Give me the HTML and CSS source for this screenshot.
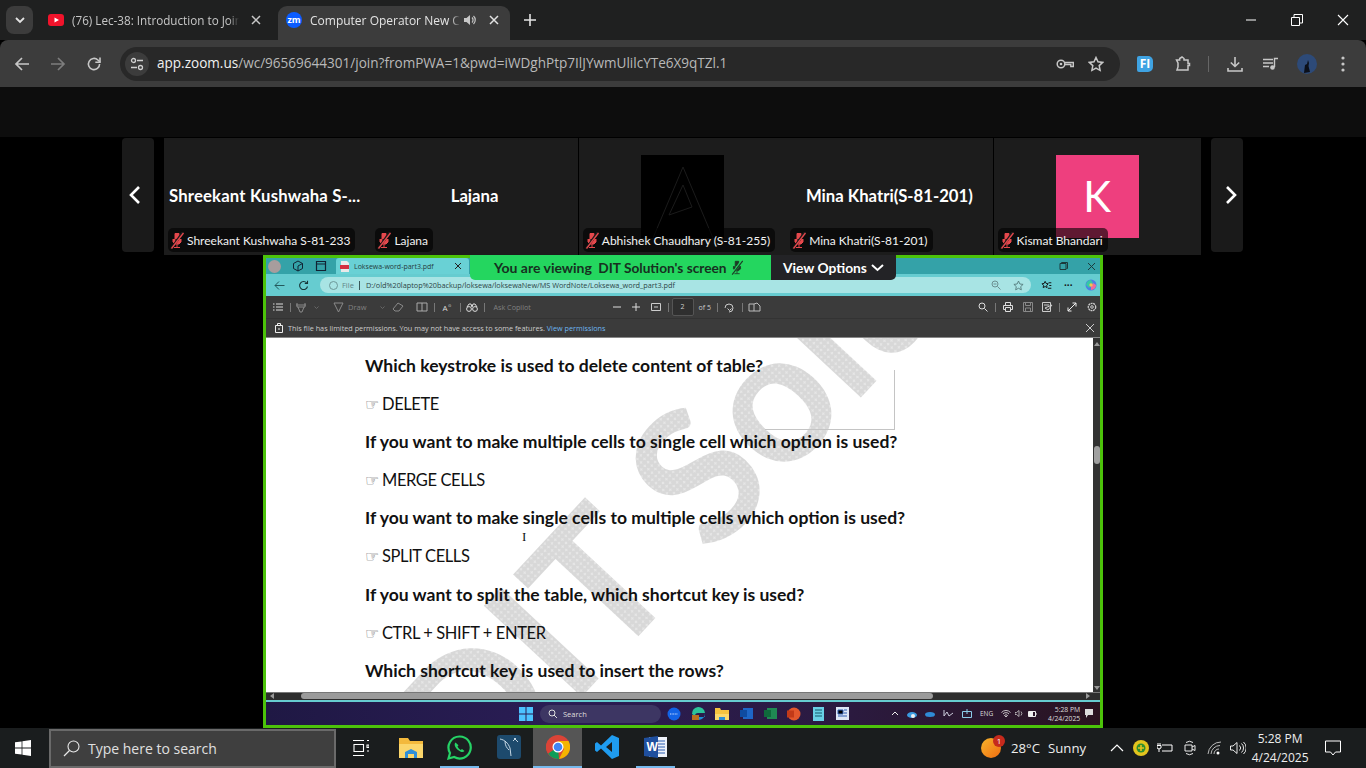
FILE: index.html
```html
<!DOCTYPE html>
<html lang="en">
<head>
    <meta charset="UTF-8">
    <title>Computer Operator New Class</title>
    <link rel="stylesheet" href="styles.css">
</head>
<body>
    <!-- Browser tabs -->
    <div class="tabstrip">
        <div class="tab-search"><svg width="12" height="12" viewBox="0 0 12 12"><path d="M2 4l4 4 4-4" fill="none" stroke="#e3e3e3" stroke-width="1.8"/></svg></div>
        <div class="tab tab-one">
            <svg width="16" height="12" viewBox="0 0 16 12"><rect width="16" height="12" rx="3" fill="#f1132b"/><path d="M6.5 3.4v5.2L11 6z" fill="#fff"/></svg>
            <span class="tab-title">(76) Lec-38: Introduction to Join</span>
            <svg class="tab-x" width="10" height="10" viewBox="0 0 10 10"><path d="M1 1l8 8M9 1L1 9" stroke="#c7c7c7" stroke-width="1.5"/></svg>
        </div>
        <div class="tab tab-active">
            <span class="zm-icon">zm</span>
            <span class="tab-title">Computer Operator New Cl</span>
            <svg class="tab-sound" width="14" height="14" viewBox="0 0 14 14"><path d="M1 5v4h2.500L7 12V2L3.500 5z" fill="#c7c7c7"/><path d="M9 4.500a3.500 3.500 0 010 5M10.500 3a5.500 5.500 0 010 8" fill="none" stroke="#c7c7c7" stroke-width="1.200"/></svg>
            <svg class="tab-x" width="10" height="10" viewBox="0 0 10 10"><path d="M1 1l8 8M9 1L1 9" stroke="#e3e3e3" stroke-width="1.5"/></svg>
        </div>
        <svg class="tab-new" width="12" height="12" viewBox="0 0 12 12"><path d="M6 0v12M0 6h12" stroke="#e3e3e3" stroke-width="1.6"/></svg>
        <div class="win-controls">
            <svg width="12" height="12" viewBox="0 0 12 12"><path d="M1 6h10" stroke="#fff"/></svg>
            <svg width="12" height="12" viewBox="0 0 12 12"><path d="M.5 3.500h8v8h-8zM3 3.500V.5h8.500V9H8.500" fill="none" stroke="#fff"/></svg>
            <svg width="12" height="12" viewBox="0 0 12 12"><path d="M1 1l10 10M11 1L1 11" stroke="#fff" stroke-width="1.100"/></svg>
        </div>
    </div>

    <!-- Browser toolbar -->
    <div class="toolbar">
        <svg class="nav" width="16" height="16" viewBox="0 0 16 16"><path d="M15 8H2M8 2L2 8l6 6" fill="none" stroke="#c7c7c7" stroke-width="1.700"/></svg>
        <svg class="nav" width="16" height="16" viewBox="0 0 16 16"><path d="M1 8h13M8 2l6 6-6 6" fill="none" stroke="#7d7d7d" stroke-width="1.700"/></svg>
        <svg class="nav" width="16" height="16" viewBox="0 0 16 16"><path d="M13.600 8A5.600 5.600 0 1 1 11.900 4L14 6" fill="none" stroke="#c7c7c7" stroke-width="1.600"/><path d="M14 1.500v4.700H9.300" fill="none" stroke="#c7c7c7" stroke-width="1.600"/></svg>
        <div class="omnibox">
            <span class="site-icon"><svg width="14" height="14" viewBox="0 0 14 14"><circle cx="3.500" cy="3.500" r="2" fill="none" stroke="#d0d0d0" stroke-width="1.300"/><path d="M7 3.500h6M1 10.500h6" stroke="#d0d0d0" stroke-width="1.300"/><circle cx="10.500" cy="10.500" r="2" fill="none" stroke="#d0d0d0" stroke-width="1.300"/></svg></span>
            <span class="url"><b>app.zoom.us</b>/wc/96569644301/join?fromPWA=1&amp;pwd=iWDghPtp7IlJYwmUlilcYTe6X9qTZl.1</span>
            <svg class="key" width="18" height="12" viewBox="0 0 18 12"><circle cx="5" cy="6" r="3.800" fill="none" stroke="#c7c7c7" stroke-width="1.500"/><circle cx="5" cy="6" r="1.300" fill="#c7c7c7"/><path d="M9 4.500h8.300v4h-2.500V6.500H9" fill="none" stroke="#c7c7c7" stroke-width="1.400"/></svg>
            <svg class="star" width="16" height="16" viewBox="0 0 16 16"><path d="M8 1.500l2 4.300 4.700.6-3.500 3.200.9 4.700L8 12l-4.100 2.300.9-4.700L1.300 6.400 6 5.800z" fill="none" stroke="#c7c7c7" stroke-width="1.500"/></svg>
        </div>
        <span class="ext-fi">FI</span>
        <svg class="ext-puzzle" width="16" height="16" viewBox="0 0 16 16"><path d="M1.500 4h3.200V2.500L7 1l2 1.500V4h4v3.500h1.500v2H13V14H2l1-3V7z" fill="none" stroke="#c7c7c7" stroke-width="1.500"/></svg>
        <span class="tool-sep"></span>
        <svg class="tool-dl" width="16" height="16" viewBox="0 0 16 16"><path d="M8 1v9M3.800 6.500L8 10.500l4.200-4M1 12v3h14v-3" fill="none" stroke="#c7c7c7" stroke-width="1.600"/></svg>
        <svg class="tool-media" width="16" height="14" viewBox="0 0 16 14"><path d="M0 2.500h10M0 6h10M0 9.500h6M11.500 10V1.500H15" fill="none" stroke="#c7c7c7" stroke-width="1.400"/><circle cx="9.500" cy="10.500" r="2.300" fill="#c7c7c7"/></svg>
        <span class="tool-avatar"><svg width="20" height="20" viewBox="0 0 20 20"><circle cx="10" cy="10" r="10" fill="#2d4a78"/><path d="M7 19l1-8 2-1 1-4 1 3-.5 3 1.500 6z" fill="#0b0f18"/></svg></span>
        <svg class="tool-dots" width="4" height="16" viewBox="0 0 4 16"><circle cx="2" cy="2" r="1.600" fill="#c7c7c7"/><circle cx="2" cy="8" r="1.600" fill="#c7c7c7"/><circle cx="2" cy="14" r="1.600" fill="#c7c7c7"/></svg>
    </div>

    <div class="top-gap"></div>

    <!-- Participant strip -->
    <div class="strip">
        <div class="strip-arrow"><svg class="chev-prev" width="12" height="18" viewBox="0 0 12 18"><path d="M10 1L2 9l8 8" fill="none" stroke="#fff" stroke-width="2.600"/></svg></div>
        <div class="tiles">
            <div class="tile">
                <span class="tile-name tile-name-long">Shreekant Kushwaha S-...</span>
                <span class="tile-label"><svg class="mic" width="14" height="17" viewBox="0 0 14 17"><use href="#mic-off"/></svg>Shreekant Kushwaha S-81-233</span>
            </div>
            <div class="tile tile-end">
                <span class="tile-name">Lajana</span>
                <span class="tile-label"><svg class="mic" width="14" height="17" viewBox="0 0 14 17"><use href="#mic-off"/></svg>Lajana</span>
            </div>
            <div class="tile">
                <span class="tile-avatar avatar-black"><svg width="83" height="83" viewBox="0 0 83 83"><path d="M12 83L42 12l30 71M28 60l14-30 9 22z" fill="none" stroke="#1b1b1b" stroke-width="1"/></svg></span>
                <span class="tile-label"><svg class="mic" width="14" height="17" viewBox="0 0 14 17"><use href="#mic-off"/></svg>Abhishek Chaudhary (S-81-255)</span>
            </div>
            <div class="tile tile-end">
                <span class="tile-name">Mina Khatri(S-81-201)</span>
                <span class="tile-label"><svg class="mic" width="14" height="17" viewBox="0 0 14 17"><use href="#mic-off"/></svg>Mina Khatri(S-81-201)</span>
            </div>
            <div class="tile">
                <span class="tile-avatar avatar-pink">K</span>
                <span class="tile-label"><svg class="mic" width="14" height="17" viewBox="0 0 14 17"><use href="#mic-off"/></svg>Kismat Bhandari</span>
            </div>
        </div>
        <div class="strip-arrow strip-next"><svg class="chev-next" width="12" height="18" viewBox="0 0 12 18"><path d="M2 1l8 8-8 8" fill="none" stroke="#fff" stroke-width="2.600"/></svg></div>
    </div>

    <!-- Shared screen -->
    <div class="share-area">
        <div class="share-frame">
            <div class="edge-title">
                <span class="edge-avatar"></span>
                <svg class="edge-ic" width="12" height="12" viewBox="0 0 12 12"><path d="M6 1l4.500 2.500v5L6 11 1.500 8.500v-5zM6 6v5M6 6l4.500-2.500" fill="none" stroke="#123" stroke-width="1"/></svg>
                <svg class="edge-ic" width="12" height="12" viewBox="0 0 12 12"><path d="M1.500 1.500h9v9h-9zM1.500 4h9" fill="none" stroke="#123" stroke-width="1.200"/></svg>
                <div class="edge-tab">
                    <svg width="10" height="11" viewBox="0 0 10 11"><path d="M1 0h6l2 2v9H1z" fill="#e9e9e9"/><rect y="4" width="9" height="4" fill="#d32f3f"/></svg>
                    <span class="edge-tab-title">Loksewa-word-part3.pdf</span>
                    <svg class="edge-tab-x" width="8" height="8" viewBox="0 0 8 8"><path d="M1 1l6 6M7 1L1 7" stroke="#222" stroke-width="1"/></svg>
                </div>
                <div class="edge-controls">
                    <svg width="9" height="9" viewBox="0 0 9 9"><path d="M1 1.500h6v6H1zM2.500 1.500V.5h6v6h-1" fill="none" stroke="#1c3a3c"/></svg>
                    <svg width="9" height="9" viewBox="0 0 9 9"><path d="M1 1l7 7M8 1L1 8" stroke="#1c3a3c"/></svg>
                </div>
            </div>
            <div class="edge-addr">
                <svg width="11" height="11" viewBox="0 0 11 11"><path d="M10.500 5.500H1M5 1.500l-4 4 4 4" fill="none" stroke="#23595c" stroke-width="1"/></svg>
                <svg class="edge-reload" width="11" height="11" viewBox="0 0 11 11"><path d="M9.500 6.500a4 4 0 11-.8-3.500M9.500 .8v2.700H6.800" fill="none" stroke="#173436" stroke-width="1.100"/></svg>
                <div class="edge-pill">
                    <span class="edge-info"></span>
                    <span class="edge-file">File</span>
                    <span class="edge-bar"></span>
                    <span class="edge-url">D:/old%20laptop%20backup/loksewa/loksewaNew/MS WordNote/Loksewa_word_part3.pdf</span>
                    <svg class="edge-zoom" width="10" height="10" viewBox="0 0 10 10"><circle cx="4" cy="4" r="3" fill="none" stroke="#6a8f90"/><path d="M6.500 6.500l3 3M2.500 4h3" stroke="#6a8f90"/></svg>
                    <svg class="edge-star" width="11" height="11" viewBox="0 0 16 16"><path d="M8 1.500l2 4.300 4.700.6-3.500 3.200.9 4.700L8 12l-4.100 2.300.9-4.700L1.300 6.400 6 5.800z" fill="none" stroke="#53797a" stroke-width="1.300"/></svg>
                </div>
                <svg class="edge-fav" width="11" height="11" viewBox="0 0 16 16"><path d="M6 2l1.500 3 3 .5-2.200 2.200.5 3.300L6 9.500 3.200 11l.5-3.300L1.500 5.500l3-.5zM11 4h4M12 8h3M10 12h5" fill="none" stroke="#111" stroke-width="1.400"/></svg>
                <span class="edge-dots">&middot;&middot;&middot;</span>
                <svg class="edge-copilot" width="12" height="12" viewBox="0 0 12 12"><circle cx="6" cy="6" r="5.500" fill="#4b7fe6"/><path d="M1 6a5 5 0 015-5l2 3-4 5z" fill="#34c7a6"/><path d="M6 11a5 5 0 005-5L8 4 6 8z" fill="#ef6b9b"/><circle cx="6" cy="6" r="1.700" fill="#f4c24f"/></svg>
            </div>
            <div class="pdf-toolbar">
                <svg width="10" height="8" viewBox="0 0 10 8"><path d="M0 1h1.500M3 1h7M0 4h1.500M3 4h7M0 7h1.500M3 7h7" stroke="#ddd"/></svg>
                <span class="pdf-sep pdf-sep-a"></span>
                <svg class="pdf-hl" width="10" height="11" viewBox="0 0 10 11"><path d="M1 1v4h8V1M2 5l2 5h2l2-5M0 3h10" fill="none" stroke="#8a8a8a"/></svg>
                <svg class="pdf-chev-a" width="5" height="3" viewBox="0 0 5 3"><path d="M.5.5l2 2 2-2" fill="none" stroke="#666"/></svg>
                <span class="pdf-draw"><svg width="11" height="11" viewBox="0 0 11 11"><path d="M1 1l4.500 9L10 1z" fill="none" stroke="#8a8a8a"/></svg>Draw</span>
                <svg class="pdf-chev-b" width="5" height="3" viewBox="0 0 5 3"><path d="M.5.5l2 2 2-2" fill="none" stroke="#666"/></svg>
                <svg class="pdf-eraser" width="12" height="10" viewBox="0 0 12 10"><path d="M1 7l5-6 5 3-4 5H3z" fill="none" stroke="#8a8a8a"/></svg>
                <svg class="pdf-read" width="12" height="10" viewBox="0 0 12 10"><path d="M1 1h10v8H1zM6 1v8" fill="none" stroke="#aaa"/></svg>
                <span class="pdf-sep pdf-sep-b"></span>
                <span class="pdf-aa">A<sup>&#8857;</sup></span>
                <span class="pdf-sep pdf-sep-c"></span>
                <svg class="pdf-lang" width="12" height="9" viewBox="0 0 12 9"><circle cx="3" cy="6" r="2.400" fill="none" stroke="#ddd"/><circle cx="9" cy="6" r="2.400" fill="none" stroke="#ddd"/><path d="M1 4l2-3h2l1 3 1-3h2l2 3" fill="none" stroke="#ddd"/></svg>
                <span class="pdf-sep pdf-sep-c2"></span>
                <span class="pdf-ask">Ask Copilot</span>
                <svg class="pdf-minus" width="8" height="8" viewBox="0 0 8 8"><path d="M0 4h8" stroke="#ddd"/></svg>
                <svg class="pdf-plus" width="8" height="8" viewBox="0 0 8 8"><path d="M0 4h8M4 0v8" stroke="#ddd"/></svg>
                <svg class="pdf-fit" width="10" height="8" viewBox="0 0 10 8"><path d="M.5.5h9v7h-9zM3 4h4" fill="none" stroke="#ccc"/></svg>
                <span class="pdf-sep pdf-sep-d"></span>
                <span class="pdf-page">2</span>
                <span class="pdf-of">of 5</span>
                <span class="pdf-sep pdf-sep-e"></span>
                <svg class="pdf-rot" width="10" height="11" viewBox="0 0 10 11"><path d="M1 6a4 4 0 114 4M3.500 6.500l2 2 2-2" fill="none" stroke="#ccc"/></svg>
                <span class="pdf-sep pdf-sep-f"></span>
                <svg class="pdf-two" width="13" height="10" viewBox="0 0 13 10"><path d="M1 2h5v7H1zM6 2l3-1 3 3v5H6" fill="none" stroke="#bbb"/></svg>
                <svg class="pdf-find" width="10" height="10" viewBox="0 0 10 10"><circle cx="4" cy="4" r="3" fill="none" stroke="#ddd"/><path d="M6.500 6.500l3 3" stroke="#ddd"/></svg>
                <span class="pdf-sep pdf-sep-g"></span>
                <svg class="pdf-print" width="10" height="10" viewBox="0 0 10 10"><path d="M.5 3.500h9v4h-2v-2h-5v2h-2zM2.500 3V.5h5V3M2.500 6v3.500h5V6" fill="none" stroke="#ddd"/></svg>
                <svg class="pdf-save" width="10" height="10" viewBox="0 0 10 10"><path d="M.5.500h9v9h-9zM2.500 1v2.500h5V1M2.500 9V6h5v3" fill="none" stroke="#888"/></svg>
                <svg class="pdf-saveas" width="11" height="10" viewBox="0 0 11 10"><path d="M.5.500h8v9h-8zM2 3h5M3 6l7-3-4 5z" fill="none" stroke="#ccc"/></svg>
                <span class="pdf-sep pdf-sep-h"></span>
                <svg class="pdf-full" width="10" height="10" viewBox="0 0 10 10"><path d="M1 9l8-8M5.500 1H9v3.500M1 5.500V9h3.500" fill="none" stroke="#eee"/></svg>
                <svg class="pdf-gear" width="10" height="10" viewBox="0 0 10 10"><circle cx="5" cy="5" r="3.700" fill="none" stroke="#ccc" stroke-width="1.300" stroke-dasharray="2 .6"/><circle cx="5" cy="5" r="1.300" fill="none" stroke="#ccc"/></svg>
            </div>
            <div class="pdf-notice">
                <svg width="8" height="10" viewBox="0 0 8 10"><path d="M.5 2.500h7v7h-7zM2.500 2.500V.5h3v2M4 5v2" fill="none" stroke="#eee"/></svg>
                <span class="notice-text">This file has limited permissions. You may not have access to some features. <a class="notice-link">View permissions</a></span>
                <svg class="notice-x" width="8" height="8" viewBox="0 0 8 8"><path d="M0 0l8 8M8 0L0 8" stroke="#ccc"/></svg>
            </div>
            <div class="pdf-body">
                <div class="pdf-page-sheet">
                    <span class="watermark">DIT Solution</span>
                    <span class="stray-box"></span>
                    <p class="q">Which keystroke is used to delete content of table?</p>
                    <p class="a"><span class="hand">&#9758;</span>DELETE</p>
                    <p class="q">If you want to make multiple cells to single cell which option is used?</p>
                    <p class="a"><span class="hand">&#9758;</span>MERGE CELLS</p>
                    <p class="q">If you want to make single cells to multiple cells which option is used?</p>
                    <p class="a"><span class="hand">&#9758;</span>SPLIT CELLS</p>
                    <p class="q">If you want to split the table, which shortcut key is used?</p>
                    <p class="a"><span class="hand">&#9758;</span>CTRL + SHIFT + ENTER</p>
                    <p class="q">Which shortcut key is used to insert the rows?</p>
                    <span class="ibeam">I</span>
                </div>
                <div class="vscroll"><span class="v-up"></span><span class="v-thumb"></span><span class="v-down"></span></div>
            </div>
            <div class="hscroll"><span class="h-left"></span><span class="h-thumb"></span><span class="h-right"></span></div>
            <div class="mini-taskbar">
                <svg class="mini-win" width="14" height="14" viewBox="0 0 14 14"><path d="M0 0h6.500v6.500H0zM7.500 0H14v6.500H7.500zM0 7.500h6.500V14H0zM7.500 7.500H14V14H7.500z" fill="#4cc2ff"/></svg>
                <div class="mini-search">
                    <svg width="9" height="9" viewBox="0 0 9 9"><circle cx="4" cy="4" r="3" fill="none" stroke="#ddd"/><path d="M6 6l3 3" stroke="#ddd"/></svg>
                    <span>Search</span>
                </div>
                <span class="mini-app"><svg width="14" height="14" viewBox="0 0 14 14"><circle cx="7" cy="7" r="6.500" fill="#1263e6"/><path d="M3 7h8" stroke="#cfe0ff" stroke-dasharray="1 .6"/></svg></span>
                <span class="mini-app mini-on"><svg width="15" height="15" viewBox="0 0 15 15"><path d="M1 8a6.500 6.500 0 0113-1H7a3 3 0 00-3 3z" fill="#2cc39a"/><path d="M14 7a6.500 6.500 0 01-6 7 4 4 0 01-2-3h8z" fill="#1b8fd6"/><rect x="1" y="9" width="7" height="5" fill="#b9701f"/></svg></span>
                <span class="mini-app"><svg width="14" height="13" viewBox="0 0 14 13"><path d="M0 1h5l1 2h8v10H0z" fill="#f6c33f"/><path d="M0 7h14v6H0z" fill="#fbd96c"/><rect x="4" y="10" width="6" height="3" fill="#2d8fd5"/></svg></span>
                <span class="mini-app"><svg width="13" height="13" viewBox="0 0 13 13"><rect x="3" y="1" width="10" height="11" fill="#1e66c7"/><rect y="3" width="7" height="7" fill="#0f4ba1"/></svg></span>
                <span class="mini-app"><svg width="13" height="13" viewBox="0 0 13 13"><rect x="3" y="1" width="10" height="11" fill="#1f8a53"/><rect y="3" width="7" height="7" fill="#0f6b3c"/></svg></span>
                <span class="mini-app"><svg width="14" height="14" viewBox="0 0 14 14"><circle cx="7" cy="7" r="6.500" fill="#e2572c"/><rect y="3.500" width="7" height="7" fill="#c23a18"/></svg></span>
                <span class="mini-app"><svg width="11" height="14" viewBox="0 0 11 14"><rect width="11" height="14" fill="#69d0e6"/><path d="M2 3h7M2 6h7M2 9h7" stroke="#14596b"/></svg></span>
                <span class="mini-app"><svg width="13" height="13" viewBox="0 0 13 13"><rect width="13" height="13" fill="#dde6f5"/><path d="M2 3h5v4H2zM8 3h3M8 6h3M2 9h9" stroke="#2b5bb0"/></svg></span>
                <div class="mini-tray">
                    <svg width="8" height="5" viewBox="0 0 8 5"><path d="M1 4l3-3 3 3" fill="none" stroke="#eee"/></svg>
                    <svg class="mt" width="10" height="8" viewBox="0 0 10 8"><ellipse cx="5" cy="5" rx="5" ry="3" fill="#3a9be0"/><circle cx="6" cy="6" r="2" fill="#eee"/></svg>
                    <svg class="mt" width="10" height="6" viewBox="0 0 10 6"><ellipse cx="5" cy="3.500" rx="5" ry="2.500" fill="#2f8bd6"/></svg>
                    <svg class="mt" width="11" height="9" viewBox="0 0 11 9"><path d="M1 1v6l3-4 2 4 4-3" fill="none" stroke="#ccd"/></svg>
                    <svg class="mt" width="10" height="9" viewBox="0 0 10 9"><path d="M.5 2.500h9v6h-9zM5 0v5" fill="none" stroke="#8ccbe8"/></svg>
                    <span class="mini-eng">ENG</span>
                    <svg class="mt" width="10" height="7" viewBox="0 0 10 7"><path d="M.5 2.500a6 6 0 019 0M2 4a4 4 0 016 0M5 7L3.500 5.500a2 2 0 013 0z" fill="none" stroke="#eee" stroke-width=".8"/></svg>
                    <svg class="mt-s" width="9" height="7" viewBox="0 0 9 7"><path d="M0 2.500v2h1.500L4 6.500V.5L1.500 2.500zM6 1.500a3 3 0 010 4" fill="none" stroke="#ccc" stroke-width=".8"/></svg>
                    <svg class="mt-s" width="9" height="7" viewBox="0 0 9 7"><path d="M.5 1.500h7v5h-7zM8 3v2" fill="none" stroke="#eee"/><path d="M1 2h4v4H1z" fill="#eee"/></svg>
                    <span class="mini-clock">5:28 PM<br>4/24/2025</span>
                    <svg class="mini-note" width="8" height="9" viewBox="0 0 8 9"><path d="M0 0h8v6H3L1 9V6H0z" fill="#ddd"/></svg>
                </div>
            </div>
            <div class="view-banner">
                <div class="view-green">You are viewing <span class="view-who">DIT Solution's screen</span>
                    <svg width="14" height="15" viewBox="0 0 14 17"><use href="#mic-dark"/></svg>
                </div>
                <div class="view-opt">View Options <svg width="13" height="8" viewBox="0 0 13 8"><path d="M1 1l5.500 5L12 1" fill="none" stroke="#fff" stroke-width="2"/></svg></div>
            </div>
        </div>
    </div>

    <!-- Windows taskbar -->
    <div class="taskbar">
        <svg class="start" width="16" height="16" viewBox="0 0 16 16"><path d="M0 2.300l6.600-.9v6.200H0zM7.400 1.300L16 0v7.600H7.400zM0 8.400h6.600v6.200L0 13.700zM7.400 8.400H16V16l-8.600-1.300z" fill="#fff"/></svg>
        <div class="task-search">
            <svg width="17" height="17" viewBox="0 0 17 17"><circle cx="10.500" cy="6.500" r="5.500" fill="none" stroke="#e8e8e8" stroke-width="1.100"/><path d="M6.500 10.500L1 16" stroke="#e8e8e8" stroke-width="1.200"/></svg>
            <span>Type here to search</span>
        </div>
        <svg class="task-view" width="16" height="16" viewBox="0 0 16 16"><path d="M0 .5h11M0 15.500h11M1 4.500h9.500v7H1zM14 .5h2M14 5h2v2.500h-2zM14 11h2" fill="none" stroke="#fff" stroke-width="1.100"/></svg>
        <div class="apps">
            <span class="app"><svg width="24" height="21" viewBox="0 0 24 21"><path d="M0 1h9l2 3h13v17H0z" fill="#f3b93c"/><path d="M0 7h24v14H0z" fill="#fbd66b"/><path d="M6 21v-6l6-3 6 3v6h-3v-4H9v4z" fill="#2f8fd8"/></svg></span>
            <span class="app app-open"><svg width="25" height="25" viewBox="0 0 25 25"><path d="M12.500 1.500a11 11 0 00-9.500 16.500L1.500 23.500l5.700-1.500A11 11 0 1012.500 1.500z" fill="#1c1f20" stroke="#25d366" stroke-width="2.200"/><path d="M8.500 7.500c-2 2 0 5.500 2.500 7.500s5 3 6.500 1l-2.500-2-1.300 1c-1.500-.8-2.500-2-3.200-3.500l1-1.300z" fill="#25d366"/></svg></span>
            <span class="app"><svg width="24" height="24" viewBox="0 0 24 24"><rect width="24" height="24" rx="3" fill="#1d4a6d"/><path d="M3 4c5 1 8 4 10 9l1 8M8 6c0 5 2 7 4 9M17 3l4 4M19 3l-3 3" fill="none" stroke="#c5d7e4" stroke-width="1"/></svg></span>
            <span class="app app-open app-active"><svg width="24" height="24" viewBox="0 0 24 24"><circle cx="12" cy="12" r="12" fill="#db4437"/><path d="M12 12L2.200 18.500A12 12 0 0012 24a12 12 0 001-.1z" fill="#0f9d58"/><path d="M12 6h10.500A12 12 0 0113 24l5-10z" fill="#f4b400"/><path d="M2 5.500a12 12 0 000 13l5-5z" fill="#db4437"/><circle cx="12" cy="12" r="5.500" fill="#fff"/><circle cx="12" cy="12" r="4.300" fill="#4285f4"/></svg></span>
            <span class="app"><svg width="24" height="24" viewBox="0 0 24 24"><path d="M17 0l7 3v18l-7 3L6 13.500 2 17l-2-1.500V8.500L2 7l4 3.500zM17 7l-6 5 6 5z" fill="#1f9cf0" fill-rule="evenodd"/></svg></span>
            <span class="app app-open"><svg width="24" height="24" viewBox="0 0 24 24"><rect x="5" y="2" width="18" height="20" fill="#eef2fa"/><path d="M13 6h8M13 9h8M13 12h8M13 15h8M13 18h8" stroke="#2b5fb3"/><path d="M0 3l14-2v22L0 21z" fill="#1f4f9e"/><text x="2.500" y="16" class="word-w">W</text></svg></span>
        </div>
        <div class="weather">
            <span class="sun"><span class="sun-badge">1</span></span>
            <span class="weather-text">28°C</span><span class="weather-text sunny">Sunny</span>
        </div>
        <div class="tray">
            <svg width="14" height="8" viewBox="0 0 14 8"><path d="M1 7l6-6 6 6" fill="none" stroke="#fff" stroke-width="1.200"/></svg>
            <svg class="tray-av" width="16" height="16" viewBox="0 0 16 16"><circle cx="8" cy="8" r="8" fill="#e3c41e"/><circle cx="8" cy="8" r="4.500" fill="#2e8f2e"/><path d="M8 5v6M5 8h6" stroke="#e3c41e" stroke-width="1.600"/></svg>
            <svg class="tray-plug" width="16" height="12" viewBox="0 0 16 12"><path d="M5 3h10v6H5M3 1v2M1 1v2M0 3.500h4V6l-2 1-2-1zM2 7v3" fill="none" stroke="#fff"/></svg>
            <svg class="tray-cam" width="12" height="16" viewBox="0 0 12 16"><path d="M1 5h7v6H1zM8 7l3-1.500v5L8 9M2 2.500a6 6 0 017 0M2 13.500a6 6 0 007 0" fill="none" stroke="#fff" stroke-width=".9"/></svg>
            <svg class="tray-wifi" width="16" height="14" viewBox="0 0 16 14"><path d="M1 13a13 13 0 0113-12M4 13a9 9 0 019-8.500M7 13a5 5 0 015-5" fill="none" stroke="#bbb"/><circle cx="11" cy="12" r="1.500" fill="#fff"/></svg>
            <svg class="tray-vol" width="16" height="14" viewBox="0 0 16 14"><path d="M.5 5v4h2.500L7 12.500v-11L3 5zM9.500 4.500a3.500 3.500 0 010 5M11.500 2.500a6 6 0 010 9M13.500 1a8 8 0 010 12" fill="none" stroke="#fff" stroke-width=".9"/></svg>
            <div class="clock">5:28 PM<br>4/24/2025</div>
            <svg class="notify" width="16" height="16" viewBox="0 0 16 16"><path d="M.5 1h15v11h-5L8 15l-2.500-3h-5z" fill="none" stroke="#fff"/></svg>
        </div>
    </div>

    <!-- shared mic symbols -->
    <svg class="defs" width="0" height="0">
        <symbol id="mic-off" viewBox="0 0 14 17"><path d="M5 1.500h4v8H5zM3 7v3l2 2h4l2-2V7M7 12v3M4 15.500h6" fill="#e5484d" stroke="#e5484d"/><path d="M13 0L1 17" stroke="#1b1b1b" stroke-width="2.500"/><path d="M13.500 1L1.500 16.500" stroke="#e5484d" stroke-width="1.300"/></symbol>
        <symbol id="mic-dark" viewBox="0 0 14 17"><path d="M5 1.500h4v8H5zM3 7v3l2 2h4l2-2V7M7 12v3M4 15.500h6" fill="#1c3b26" stroke="#1c3b26"/><path d="M13 0L1 17" stroke="#24d65f" stroke-width="2.500"/><path d="M13.500 1L1.500 16.500" stroke="#1c3b26" stroke-width="1.300"/></symbol>
    </svg>
</body>
</html>
```

FILE: styles.css
```css
/* Basic Styles */
* {
    box-sizing: border-box;
}

html, body {
    margin: 0;
    padding: 0;
    width: 1366px;
    height: 768px;
    overflow: hidden;
}

body {
    display: flex;
    flex-direction: column;
    background-color: #000;
    font-family: "Open Sans", sans-serif;
    color: #fff;
}

svg {
    display: block;
    flex: none;
}

.defs {
    position: absolute;
}

/* Browser tabs */
.tabstrip {
    height: 40px;
    display: flex;
    align-items: flex-end;
    background-color: #1f2020;
    padding-left: 6px;
}

.tab-search {
    width: 27px;
    height: 28px;
    margin-bottom: 6px;
    background-color: #3c3c3c;
    border-radius: 8px;
    display: flex;
    align-items: center;
    justify-content: center;
}

.tab {
    height: 34px;
    padding-bottom: 6px;
    display: flex;
    align-items: center;
    font-size: 12px;
}

.tab-title {
    white-space: nowrap;
    flex: none;
    -webkit-mask-image: linear-gradient(90deg, #000 94%, transparent);
    mask-image: linear-gradient(90deg, #000 94%, transparent);
}

.tab-one {
    width: 245px;
    padding-left: 15px;
    color: #c7c7c7;
}

.tab-one .tab-title {
    width: 167px;
    margin-left: 8px;
    font-size: 11.7px;
}

.tab-one .tab-x {
    margin-left: 12px;
}

.tab-active {
    width: 232px;
    padding-left: 8px;
    background-color: #3c3c3c;
    border-radius: 9px 9px 0 0;
    color: #e3e3e3;
}

.zm-icon {
    width: 16px;
    height: 16px;
    border-radius: 50%;
    background-color: #0b5cff;
    color: #fff;
    font-size: 9px;
    font-weight: 700;
    line-height: 15px;
    text-align: center;
    flex: none;
}

.tab-active .tab-title {
    width: 150px;
    margin-left: 8px;
}

.tab-sound {
    margin-left: 3px;
}

.tab-active .tab-x {
    margin-left: 12px;
}

.tab-new {
    margin: 0 0 14px 14px;
}

.win-controls {
    margin-left: auto;
    height: 40px;
    display: flex;
    align-items: center;
    justify-content: flex-end;
    padding-right: 17px;
    gap: 34px;
}

/* Browser toolbar */
.toolbar {
    height: 47px;
    background-color: #3c3c3c;
    border-radius: 8px 8px 0 0;
    display: flex;
    align-items: center;
    padding-left: 14px;
}

.nav {
    margin-right: 20px;
}

.omnibox {
    width: 1000px;
    height: 34px;
    margin-left: -2px;
    background-color: #282828;
    border-radius: 17px;
    display: flex;
    align-items: center;
    padding-left: 5px;
}

.site-icon {
    width: 24px;
    height: 24px;
    border-radius: 50%;
    background-color: #3c3c3c;
    display: flex;
    align-items: center;
    justify-content: center;
}

.url {
    margin: -2px 0 0 8px;
    font-size: 13.55px;
    color: #b9b9b9;
    white-space: nowrap;
}

.url b {
    font-weight: 400;
    color: #f1f1f1;
}

.key {
    margin-left: auto;
}

.star {
    margin: 0 16px 0 14px;
}

.ext-fi {
    width: 16px;
    height: 16px;
    margin-left: 17px;
    background-color: #3fa3e3;
    border-radius: 2px 5px 5px 2px;
    font-size: 12px;
    font-weight: 700;
    line-height: 16px;
    text-align: center;
}

.ext-puzzle {
    margin-left: 22px;
}

.tool-sep {
    width: 1px;
    height: 16px;
    margin-left: 17px;
    background-color: #666;
}

.tool-dl {
    margin-left: 18px;
}

.tool-media {
    margin-left: 20px;
}

.tool-avatar {
    margin-left: 18px;
}

.tool-dots {
    margin-left: 24px;
}

.top-gap {
    height: 50px;
    background-color: #0d0d0d;
}

/* Participant strip */
.strip {
    height: 118px;
    background-color: #000;
    display: flex;
    padding: 1px 0 0 122px;
}

.strip-arrow {
    width: 32px;
    height: 114px;
    background-color: #1a1a1a;
    border-radius: 4px;
    display: flex;
    align-items: center;
    justify-content: center;
}

.chev-prev {
    margin-right: 6px;
}

.chev-next {
    margin-left: 8px;
}

.strip-next {
    margin-left: 10px;
}

.tiles {
    width: 1037px;
    margin-left: 10px;
    display: grid;
    grid-template-columns: repeat(5, 207.4px);
}

.tile {
    position: relative;
    background-color: #1c1c1c;
    display: flex;
    align-items: center;
    justify-content: center;
}

.tile-end {
    border-right: 1px solid #000;
}

.tile-name {
    font-family: Lato, sans-serif;
    font-size: 16.7px;
    font-weight: 700;
    padding-bottom: 1px;
    white-space: nowrap;
}

.tile-name-long {
    margin-right: 6px;
    letter-spacing: 0.17px;
}

.tile-avatar {
    width: 83px;
    height: 83px;
    margin-top: -1px;
    display: flex;
    align-items: center;
    justify-content: center;
}

.avatar-black {
    background-color: #000;
}

.avatar-pink {
    background-color: #ee3f7e;
    font-family: Lato, sans-serif;
    font-size: 42px;
}

.tile-label {
    position: absolute;
    left: 4px;
    bottom: 3px;
    height: 24px;
    padding: 0 5px 0 2px;
    display: flex;
    align-items: center;
    gap: 3px;
    background-color: rgba(0, 0, 0, 0.6);
    border-radius: 5px;
    font-family: Lato, sans-serif;
    font-size: 12px;
    color: #f2f2f2;
    white-space: nowrap;
}

/* Shared screen */
.share-area {
    height: 473px;
    background-color: #000;
    padding-left: 263px;
}

.share-frame {
    position: relative;
    width: 840px;
    height: 473px;
    border: 3px solid #4cc30a;
    display: flex;
    flex-direction: column;
    background-color: #fff;
    color: #333;
}

.edge-title {
    height: 16px;
    background-color: #34a2a8;
    display: flex;
    align-items: center;
    padding-left: 2px;
}

.edge-avatar {
    width: 13px;
    height: 13px;
    border-radius: 50%;
    background-color: #a79d9d;
}

.edge-ic {
    margin-left: 11px;
}

.edge-tab {
    width: 133px;
    height: 16px;
    margin-left: 9px;
    padding-left: 4px;
    background-color: #69d1d5;
    display: flex;
    align-items: center;
    border-radius: 3px 3px 0 0;
}

.edge-tab-title {
    margin-left: 4px;
    font-size: 7px;
    color: #263c3d;
    white-space: nowrap;
}

.edge-tab-x {
    margin: 0 7px 0 auto;
}

.edge-controls {
    margin-left: auto;
    padding-right: 4px;
    display: flex;
    gap: 19px;
}

.edge-addr {
    height: 22px;
    background-color: #66ccd0;
    display: flex;
    align-items: center;
    padding-left: 8px;
}

.edge-reload {
    margin-left: 13px;
}

.edge-pill {
    width: 711px;
    height: 16px;
    margin-left: 11px;
    padding-left: 9px;
    background-color: #a8e4e4;
    border-radius: 8px;
    display: flex;
    align-items: center;
}

.edge-info {
    width: 9px;
    height: 9px;
    border-radius: 50%;
    border: 1px solid #6d9899;
}

.edge-file {
    margin-left: 4px;
    font-size: 7.5px;
    color: #5f8586;
}

.edge-bar {
    width: 1px;
    height: 9px;
    margin-left: 5px;
    background-color: #39595a;
}

.edge-url {
    margin-left: 6px;
    font-size: 7.3px;
    color: #2c4445;
    white-space: nowrap;
}

.edge-zoom {
    margin-left: auto;
}

.edge-star {
    margin: 0 7px 0 12px;
}

.edge-fav {
    margin-left: 10px;
}

.edge-dots {
    margin-left: 12px;
    font-size: 10px;
    font-weight: 700;
    color: #111;
}

.edge-copilot {
    margin-left: 12px;
}

.pdf-toolbar,
.pdf-notice {
    background-color: #3b3b3b;
    display: flex;
    align-items: center;
    color: #ccc;
}

.pdf-toolbar {
    height: 23px;
    padding-left: 7px;
    border-bottom: 1px solid #333;
}

.pdf-toolbar > * {
    flex: none;
}

.pdf-sep {
    width: 1px;
    height: 9px;
    background-color: #777;
}

.pdf-sep-a { margin-left: 7px; }
.pdf-hl { margin-left: 5px; }
.pdf-chev-a { margin-left: 8px; }
.pdf-draw {
    margin-left: 14px;
    display: flex;
    align-items: center;
    gap: 4px;
    font-size: 7.5px;
    color: #808080;
}
.pdf-chev-b { margin-left: 13px; }
.pdf-eraser { margin-left: 7px; }
.pdf-read { margin-left: 12px; }
.pdf-sep-b { margin-left: 6px; }
.pdf-aa {
    margin-left: 8px;
    width: 10px;
    font-size: 8px;
    color: #ddd;
}
.pdf-aa sup { font-size: 4px; }
.pdf-sep-c { margin-left: 7px; }
.pdf-lang { margin-left: 5px; }
.pdf-sep-c2 { margin-left: 6px; }
.pdf-ask {
    margin-left: 9px;
    font-size: 7.2px;
    color: #808080;
    width: 40px;
    white-space: nowrap;
}
.pdf-minus { margin-left: 79px; }
.pdf-plus { margin-left: 11px; }
.pdf-fit { margin-left: 11px; }
.pdf-sep-d { margin-left: 7px; }
.pdf-page {
    width: 22px;
    height: 18px;
    margin-left: 3px;
    background-color: #2f2f2f;
    border: 1px solid #555;
    border-radius: 2px;
    font-size: 7px;
    line-height: 16px;
    text-align: center;
}
.pdf-of {
    margin-left: 5px;
    font-size: 7px;
    width: 14px;
    white-space: nowrap;
}
.pdf-sep-e { margin-left: 4px; }
.pdf-rot { margin-left: 6px; }
.pdf-sep-f { margin-left: 8px; }
.pdf-two { margin-left: 5px; }
.pdf-find { margin-left: 217px; }
.pdf-sep-g { margin-left: 7px; }
.pdf-print { margin-left: 7px; }
.pdf-save { margin-left: 10px; }
.pdf-saveas { margin-left: 9px; }
.pdf-sep-h { margin-left: 6px; }
.pdf-full { margin-left: 7px; }
.pdf-gear { margin-left: 10px; }

.pdf-notice {
    height: 18px;
    padding-left: 9px;
}

.notice-text {
    margin-left: 5px;
    font-size: 7.25px;
    white-space: nowrap;
}

.notice-link {
    color: #6eb6f0;
}

.notice-x {
    margin-left: auto;
    margin-right: 6px;
}

.pdf-body {
    height: 355px;
    display: flex;
    border-top: 1px solid #888;
}

.pdf-page-sheet {
    position: relative;
    width: 827px;
    overflow: hidden;
    background-color: #fff;
    padding: 9px 0 0 99px;
    color: #111;
    font-family: Lato, sans-serif;
}

.pdf-page-sheet p {
    position: relative;
    height: 38.1px;
    margin: 0;
    line-height: 38px;
    white-space: nowrap;
}

.pdf-page-sheet .q {
    font-size: 17.55px;
    font-weight: 700;
}

.pdf-page-sheet .a {
    font-size: 16.5px;
    letter-spacing: -0.4px;
}

.hand {
    display: inline-block;
    width: 17px;
    font-family: "DejaVu Sans", sans-serif;
    font-size: 16px;
    color: #555;
    letter-spacing: 0;
}

.watermark {
    position: absolute;
    left: 225px;
    top: 302px;
    font-family: Lato, sans-serif;
    font-size: 185px;
    font-weight: 700;
    line-height: 1;
    color: transparent;
    background-color: #d8d8d8;
    background-image: radial-gradient(#e6e6e6 1px, transparent 1.4px);
    background-size: 5px 5px;
    -webkit-background-clip: text;
    background-clip: text;
    white-space: nowrap;
    transform-origin: 0 100%;
    transform: rotate(-47deg);
}

.stray-box {
    position: absolute;
    left: 499px;
    top: 32px;
    width: 130px;
    height: 60px;
    border-right: 1px solid #c4c4c4;
    border-bottom: 1px solid #c4c4c4;
}

.ibeam {
    position: absolute;
    left: 256px;
    top: 191px;
    font-family: "Liberation Serif", serif;
    font-size: 13px;
}

.vscroll {
    position: relative;
    width: 7px;
    background-color: #333;
}

.v-up,
.v-down {
    position: absolute;
    left: 1px;
    width: 0;
    height: 0;
    border-left: 3px solid transparent;
    border-right: 3px solid transparent;
}

.v-up {
    top: 4px;
    border-bottom: 4px solid #999;
}

.v-down {
    bottom: 2px;
    border-top: 4px solid #999;
}

.v-thumb {
    position: absolute;
    left: 1px;
    top: 108px;
    width: 6px;
    height: 18px;
    background-color: #a0a0a0;
    border-radius: 3px;
}

.hscroll {
    position: relative;
    height: 8px;
    background-color: #2e2e2e;
    border-top: 1px solid #777;
}

.h-left,
.h-right {
    position: absolute;
    top: 0;
    width: 0;
    height: 0;
    border-top: 3px solid transparent;
    border-bottom: 3px solid transparent;
}

.h-left {
    left: 4px;
    border-right: 4px solid #999;
}

.h-right {
    right: 10px;
    border-left: 4px solid #999;
}

.h-thumb {
    position: absolute;
    left: 35px;
    top: 0;
    width: 632px;
    height: 6px;
    background-color: #9b9b9b;
    border-radius: 3px;
}

.mini-taskbar {
    flex: 1;
    border-top: 2px solid #66ccd0;
    background: linear-gradient(90deg, #1f1844, #2a1d55 35%, #2b1a3f 70%, #2a1420);
    display: flex;
    align-items: center;
    padding-left: 253px;
    color: #ddd;
}

.mini-search {
    width: 121px;
    height: 18px;
    margin-left: 7px;
    padding-left: 8px;
    background-color: #3d3663;
    border-radius: 9px;
    display: flex;
    align-items: center;
    gap: 6px;
    font-size: 7.5px;
}

.mini-app {
    width: 24px;
    display: flex;
    justify-content: center;
}

.mini-search + .mini-app {
    margin-left: 1px;
}

.mini-tray {
    margin-left: 37px;
    display: flex;
    align-items: center;
}

.mt {
    margin-left: 8px;
}

.mt-s {
    margin-left: 4px;
}

.mini-eng {
    margin-left: 8px;
    font-size: 6.5px;
}

.mini-clock {
    margin-left: 7px;
    width: 36px;
    font-size: 6.8px;
    line-height: 9px;
    text-align: right;
    white-space: nowrap;
}

.mini-note {
    margin-left: 5px;
}

.view-banner {
    position: absolute;
    left: 204px;
    top: -3px;
    display: flex;
    height: 25px;
    font-family: Lato, sans-serif;
    font-size: 14px;
    font-weight: 700;
}

.view-green {
    width: 301px;
    padding-left: 24px;
    display: flex;
    align-items: center;
    background-color: #24d65f;
    border-radius: 0 0 0 5px;
    color: #17301f;
    white-space: pre;
}

.view-who {
    margin: 0 3px 0 3px;
    font-size: 13.7px;
}

.view-opt {
    width: 125px;
    padding-left: 12px;
    display: flex;
    align-items: center;
    gap: 4px;
    background-color: #232326;
    border-radius: 0 0 5px 0;
    font-size: 13.8px;
    color: #fff;
}

/* Windows taskbar */
.taskbar {
    height: 40px;
    background-color: #1a1d1e;
    display: flex;
    align-items: center;
    padding-left: 15px;
}

.task-search {
    width: 287px;
    height: 39px;
    margin-top: 1px;
    margin-left: 18px;
    padding-left: 12px;
    background-color: #3f3f3f;
    border: 2px solid #6a6a6a;
    display: flex;
    align-items: center;
    gap: 8px;
    font-size: 14px;
    color: #e0e0e0;
}

.task-view {
    margin-left: 17px;
}

.apps {
    display: flex;
    height: 40px;
    margin-left: 17px;
}

.app {
    width: 49px;
    height: 40px;
    display: flex;
    align-items: center;
    justify-content: center;
    border-bottom: 2px solid transparent;
    position: relative;
}

.app-open::after {
    content: "";
    position: absolute;
    left: 5px;
    right: 5px;
    bottom: -2px;
    height: 2px;
    background-color: #76b9ed;
}

.app-active {
    background-color: #555;
}

.app-active::after {
    left: 0;
    right: 0;
}

.word-w {
    fill: #fff;
    font-family: "Liberation Sans", sans-serif;
    font-size: 12px;
    font-weight: 700;
}

.weather {
    margin-left: 301px;
    display: flex;
    align-items: center;
}

.sun {
    position: relative;
    width: 20px;
    height: 20px;
    border-radius: 50%;
    background: linear-gradient(135deg, #f8b52c, #ef6c11);
}

.sun-badge {
    position: absolute;
    right: -4px;
    top: -3px;
    width: 12px;
    height: 12px;
    border-radius: 50%;
    background-color: #c62a1c;
    font-size: 8px;
    line-height: 12px;
    text-align: center;
}

.weather-text {
    margin-left: 10px;
    font-size: 13.2px;
    color: #eee;
}

.sunny {
    margin-left: 8px;
}

.tray {
    margin-left: 24px;
    display: flex;
    align-items: center;
}

.tray-av { margin-left: 9px; }
.tray-plug { margin-left: 8px; }
.tray-cam { margin-left: 11px; }
.tray-wifi { margin-left: 11px; }
.tray-vol { margin-left: 7px; }

.clock {
    width: 60px;
    margin-left: 4px;
    font-size: 12px;
    line-height: 19px;
    text-align: center;
    color: #eee;
}

.notify {
    margin-left: 15px;
}
```
